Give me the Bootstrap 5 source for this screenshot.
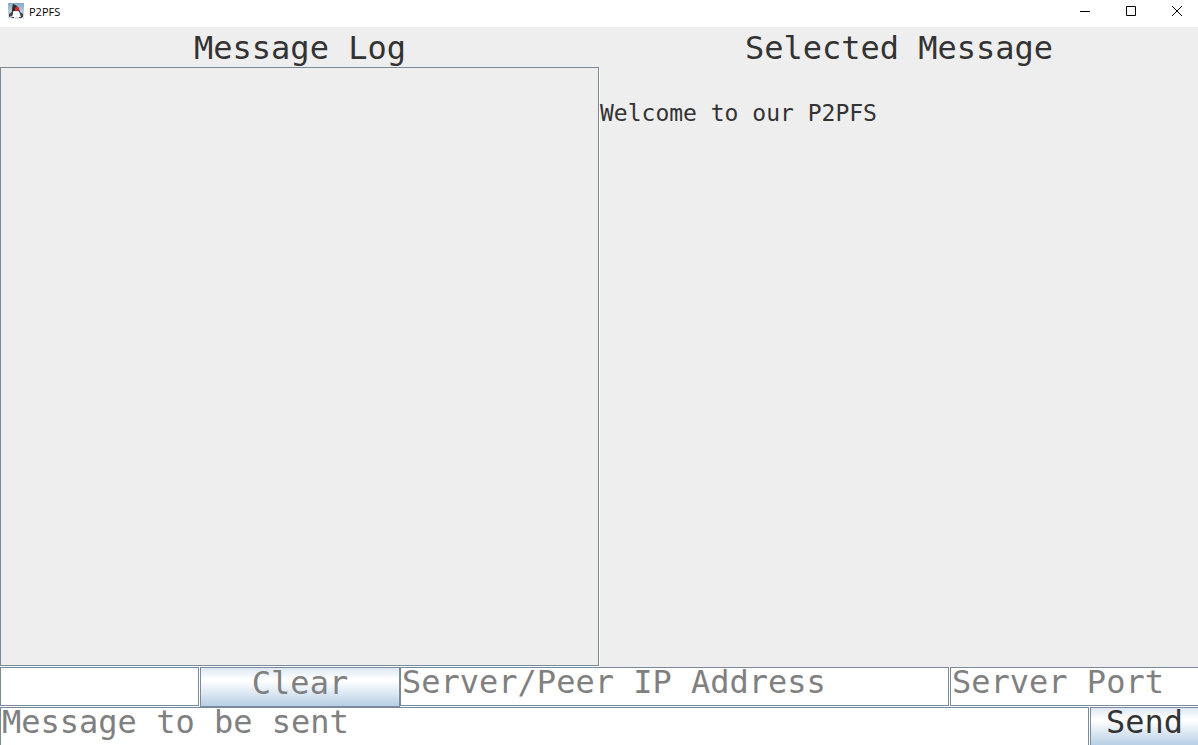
<!DOCTYPE html>
<html lang="en">
<head>
<meta charset="utf-8">
<meta name="viewport" content="width=device-width, initial-scale=1">
<title>P2PFS</title>
<link href="https://cdn.jsdelivr.net/npm/bootstrap@5.3.0/dist/css/bootstrap.min.css" rel="stylesheet">
<style>
:root { --line: #7a8a99; --ink: #333; --hint: #808080; --panel: #eee; }
body { background: var(--panel); color: var(--ink); font-family: "DejaVu Sans Mono", monospace; overflow: hidden; }
.titlebar { height: 27px; padding: 0 0 0 8px; gap: 5px; font: 11px/24px "Open Sans", sans-serif; color: #000; }
.duke { display: block; margin-top: 3px; }
.win-btns { margin-right: -2px; }
.win-btn { width: 46px; height: 22px; border-radius: 0; }
.panes { display: grid; grid-template-columns: 600fr 598fr; }
.pane-title { font-size: 32px; line-height: 42px; height: 40px; font-weight: 400; }
.bevel { padding: 0 1px 1px 0; background: #fff; min-width: 0; }
.log-list { border: 1px solid var(--line); background: var(--panel); }
.welcome { font-size: 23px; line-height: 28px; padding-top: 32px; }
.peer-row { display: grid; grid-template: 40px / 1fr 1fr 2.75fr 1.24fr; }
.send-row { display: grid; grid-template: 38px / 1fr 108px; }
.field, .field:focus { border: 1px solid var(--line); border-radius: 0; background: #fff; font-size: 32px; line-height: 28px; padding: 0 0 9px 1px; min-height: 0; height: 100%; color: var(--ink); box-shadow: none; }
.field::placeholder { color: var(--hint); opacity: 1; }
.metal, .metal:hover, .metal:active { border: 1px solid var(--line); border-radius: 0; font-size: 32px; line-height: 28px; padding: 0 0 9px; color: var(--ink); background: linear-gradient(#dde8f3, #fff 30%, #fff 34%, #b8cfe5); }
.metal.idle { color: var(--hint); }
.cut-right { border-right: 0 !important; }
.cut-bottom { border-bottom: 0 !important; }
</style>
</head>
<body>
<div class="vh-100 d-flex flex-column">
  <header class="titlebar bg-white d-flex align-items-start flex-shrink-0">
    <svg class="duke" width="16" height="16" viewBox="0 0 16 16" aria-hidden="true">
      <defs><linearGradient id="sky" x2="0" y2="1"><stop stop-color="#86a9c6"/><stop offset="1" stop-color="#e3ebf2"/></linearGradient></defs>
      <path fill="url(#sky)" d="M0 0h16v16H0z"/>
      <path fill="#2b2b2b" d="M5 1q4 1 6 5l1 3-6 1-2-1q0-5 1-8z"/>
      <path fill="#fff" d="M5 8.500q3-1.500 6 0 1.500 3 1 6l-3-1-4 1.500q-1-4 0-6.500z"/>
      <path fill="#444" d="M5 8L1 11v3l3-1 1-2zM11 8l4 3v3h-2l-1-3zM4 14h2v1H3zM11 14h3v1h-3z"/>
      <circle cx="9" cy="6" r="2.200" fill="#d8262c"/>
    </svg>
    <span>P2PFS</span>
    <div class="win-btns d-flex ms-auto">
      <button class="btn p-0 win-btn d-flex justify-content-center align-items-center" aria-label="Minimize"><svg width="12" height="12" viewBox="0 0 12 12"><path d="M1 6.500h10" stroke="#000"/></svg></button>
      <button class="btn p-0 win-btn d-flex justify-content-center align-items-center" aria-label="Maximize"><svg width="12" height="12" viewBox="0 0 12 12"><path d="M1.500 1.500h9v9h-9z" fill="none" stroke="#000"/></svg></button>
      <button class="btn p-0 win-btn d-flex justify-content-center align-items-center" aria-label="Close"><svg width="12" height="12" viewBox="0 0 12 12"><path d="M1 1l10 10M11 1L1 11" stroke="#000"/></svg></button>
    </div>
  </header>
  <main class="panes flex-grow-1">
    <section class="d-flex flex-column">
      <h1 class="pane-title text-center m-0">Message Log</h1>
      <div class="bevel d-flex flex-grow-1"><div class="log-list flex-grow-1"></div></div>
    </section>
    <section>
      <h2 class="pane-title text-center m-0">Selected Message</h2>
      <p class="welcome m-0">Welcome to our P2PFS</p>
    </section>
  </main>
  <form class="flex-shrink-0">
    <div class="peer-row">
      <div class="bevel"><input class="form-control field" type="text" aria-label="Name"></div>
      <button class="btn metal idle" type="button">Clear</button>
      <div class="bevel"><input class="form-control field" type="text" placeholder="Server/Peer IP Address" aria-label="Server or peer IP address"></div>
      <div class="bevel pe-0"><input class="form-control field cut-right" type="text" placeholder="Server Port" aria-label="Server port"></div>
    </div>
    <div class="send-row">
      <div class="bevel pb-0"><input class="form-control field cut-bottom" type="text" placeholder="Message to be sent" aria-label="Message to be sent"></div>
      <button class="btn metal cut-right cut-bottom" type="button">Send</button>
    </div>
  </form>
</div>
<script src="https://cdn.jsdelivr.net/npm/bootstrap@5.3.0/dist/js/bootstrap.bundle.min.js"></script>
</body>
</html>
